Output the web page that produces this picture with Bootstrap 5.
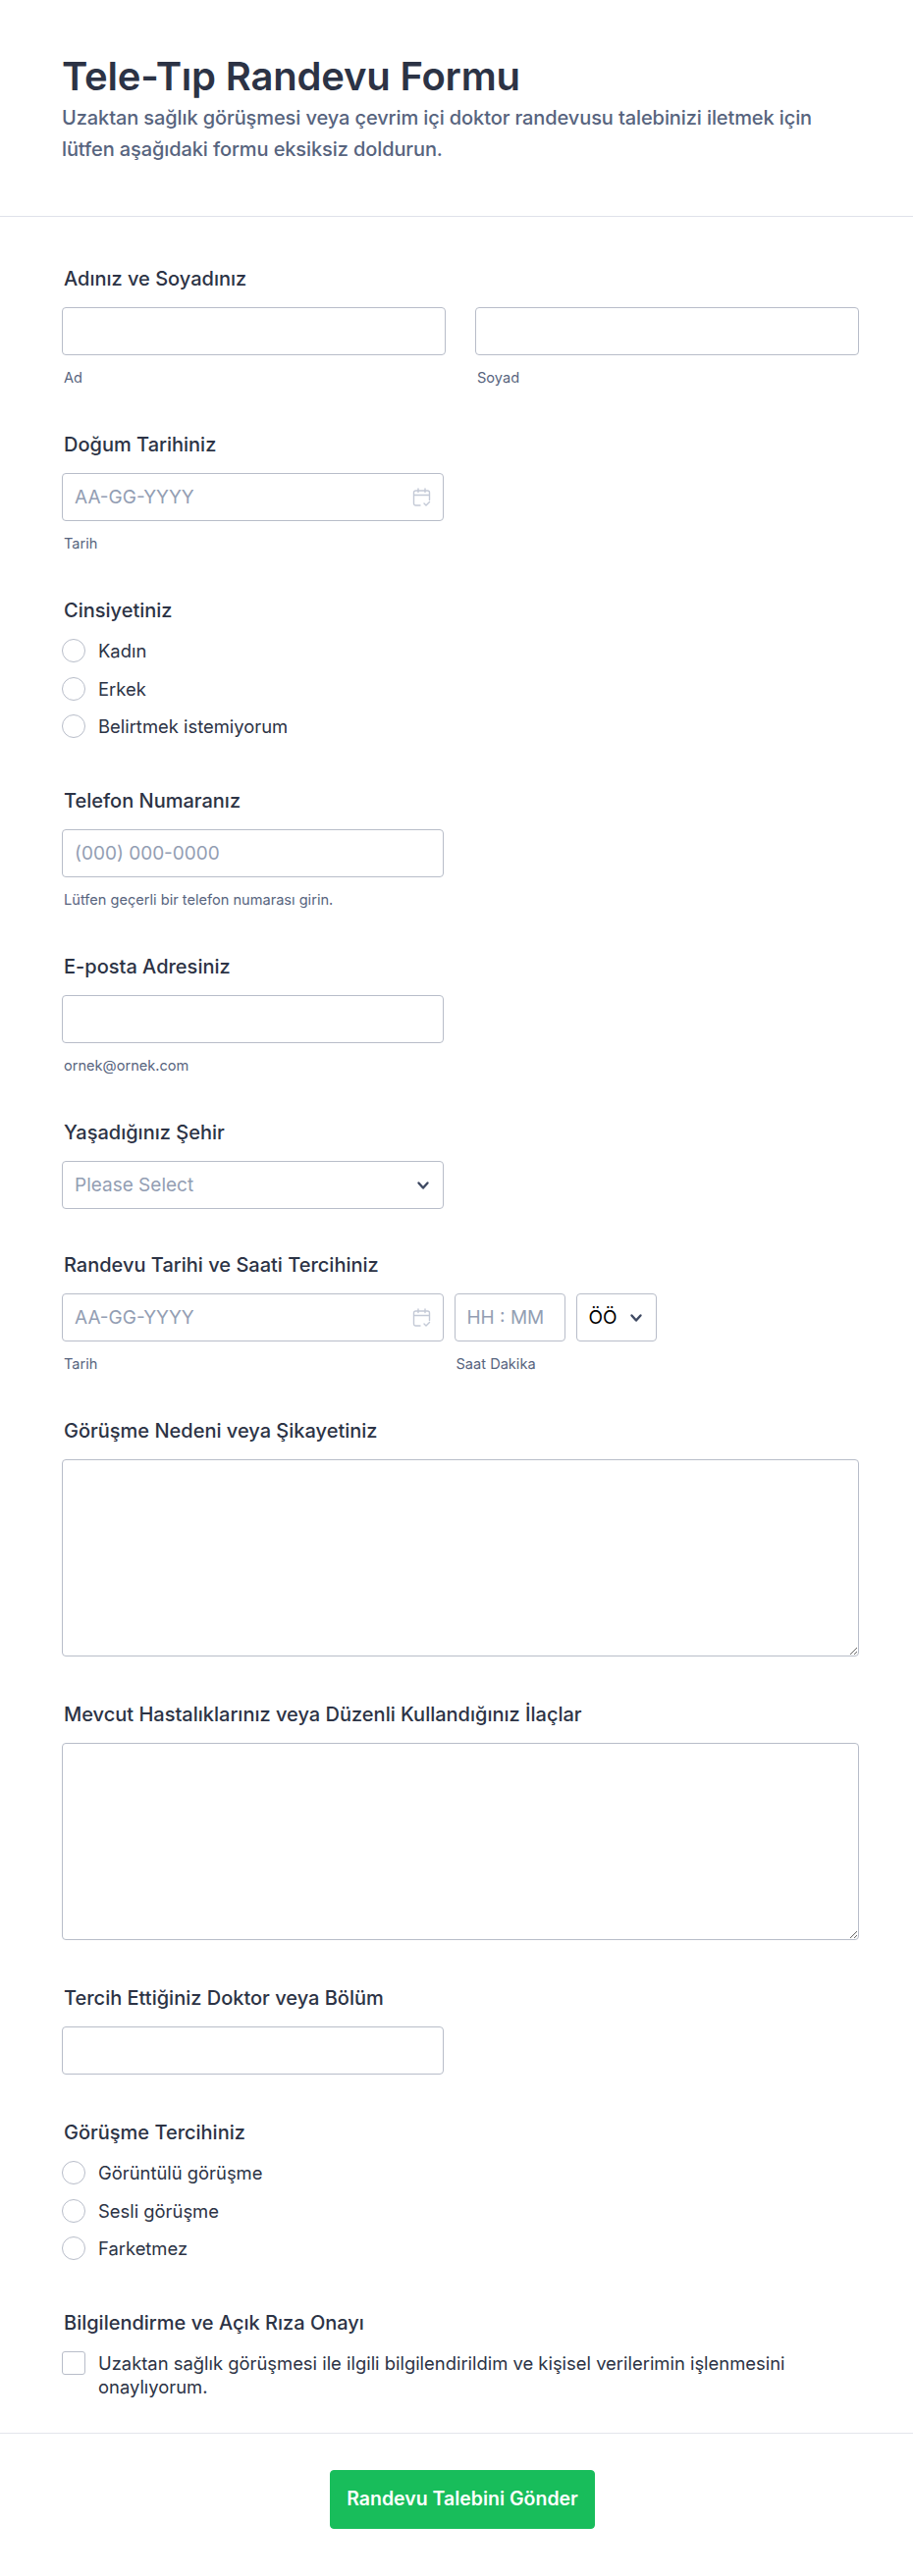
<!doctype html>
<html lang="tr">

<head>
  <meta charset="utf-8">
  <meta name="viewport" content="width=device-width, initial-scale=1">
  <title>Tele-Tıp Randevu Formu</title>
  <link href="https://cdn.jsdelivr.net/npm/bootstrap@5.3.5/dist/css/bootstrap.min.css" rel="stylesheet">
  <style>
    body {
      background-color: #fff;
      color: #2c3345;
      font-family: Inter, "Liberation Sans", sans-serif;
      font-size: 16px;
    }

    .form-head {
      height: 221px;
      padding: 51px 63px 0;
      border-bottom: 1px solid #dfe2ea;
    }

    .form-title {
      font-size: 40px;
      line-height: 53px;
      font-weight: 600;
      letter-spacing: -0.2px;
      margin: 0;
      color: #2c3345;
    }

    .form-sub {
      font-size: 20px;
      line-height: 32px;
      font-weight: 500;
      letter-spacing: -0.1px;
      color: #57647e;
      margin: 0;
    }

    .form-body {
      padding: 51px 55px 0 63px;
    }

    .field {
      margin-bottom: 47px;
    }

    .field-choices {
      margin-bottom: 52px;
    }

    .field-select {
      margin-bottom: 45px;
    }

    .field-last {
      margin-bottom: 35px;
    }

    .field-label {
      display: block;
      font-size: 20px;
      line-height: 24px;
      font-weight: 500;
      margin: 0 0 17px 2px;
      color: #2c3345;
    }

    .form-control,
    .form-select {
      height: 49px;
      border: 1px solid #b8bdc9;
      border-radius: 4px;
      font-size: 19px;
      padding: 0 12px;
      color: #2c3345;
    }

    .form-control::placeholder {
      color: #939eb3;
    }

    textarea.form-control {
      height: 201px;
    }

    .w-half {
      width: 388.5px;
    }

    .name-row {
      gap: 30px;
    }

    .name-row > div {
      flex: 1 1 0;
    }

    .sub-label {
      display: block;
      font-size: 14.6px;
      line-height: 18px;
      color: #57647e;
      margin: 14px 0 0 2px;
    }

    .date-wrap {
      position: relative;
    }

    .cal-icon {
      position: absolute;
      top: 15px;
      right: 13px;
      width: 19px;
      height: 20px;
    }

    .form-select {
      padding-top: 2px;
      background-image: url("data:image/svg+xml,%3csvg xmlns='http://www.w3.org/2000/svg' viewBox='0 0 16 12'%3e%3cpath fill='none' stroke='%233f4a63' stroke-linecap='round' stroke-linejoin='round' stroke-width='2.4' d='M3.500 3.500l4.500 5 4.500-5'/%3e%3c/svg%3e");
      background-position: right 12px center;
      background-size: 16px 12px;
    }

    .select-empty {
      color: #939eb3;
    }

    .date-row {
      gap: 11px;
    }

    .time-input {
      width: 113px;
    }

    .ampm {
      width: 82px;
      color: #000;
      padding-right: 0;
    }

    .choice {
      display: flex;
      align-items: center;
      min-height: 24px;
      padding: 0;
      margin: 0 0 14.5px;
      font-size: 18.4px;
      line-height: 24px;
    }

    .choice:last-child {
      margin-bottom: 0;
    }

    .choice .form-check-input {
      width: 24px;
      height: 24px;
      margin: 0 13px 0 0;
      float: none;
      border: 1px solid #b8bdc9;
      flex-shrink: 0;
    }

    .consent {
      align-items: flex-start;
    }

    .consent .form-check-input {
      border-radius: 3px;
    }

    .form-foot {
      border-top: 1px solid #e3e5ec;
      padding: 37px 0 0 12px;
      height: 147px;
    }

    .send-btn {
      width: 270px;
      height: 60px;
      background-color: #18bd5b;
      border-color: #18bd5b;
      color: #fff;
      font-size: 19.5px;
      font-weight: 600;
      border-radius: 4px;
      padding: 0;
    }
  </style>
</head>

<body>
  <header class="form-head">
    <h1 class="form-title">Tele-Tıp Randevu Formu</h1>
    <p class="form-sub">Uzaktan sağlık görüşmesi veya çevrim içi doktor randevusu talebinizi iletmek için<br>lütfen aşağıdaki formu eksiksiz doldurun.</p>
  </header>

  <form class="form-body">
    <div class="field">
      <label class="field-label">Adınız ve Soyadınız</label>
      <div class="d-flex name-row">
        <div><input class="form-control" type="text"><span class="sub-label">Ad</span></div>
        <div><input class="form-control" type="text"><span class="sub-label">Soyad</span></div>
      </div>
    </div>

    <div class="field">
      <label class="field-label">Doğum Tarihiniz</label>
      <div class="w-half date-wrap">
        <input class="form-control" type="text" placeholder="AA-GG-YYYY">
        <svg class="cal-icon" viewBox="0 0 19 20" fill="none" stroke="#c3c9d6" stroke-width="1.4" stroke-linecap="round" stroke-linejoin="round"><path d="M8 18H3.500a2 2 0 0 1-2-2V5a2 2 0 0 1 2-2h12a2 2 0 0 1 2 2v7.500M1.500 7.500h16M6 1v3.500M13 1v3.500M12 16l2 2 3.500-3.500"/></svg>
      </div>
      <span class="sub-label">Tarih</span>
    </div>

    <div class="field field-choices">
      <label class="field-label">Cinsiyetiniz</label>
      <div class="form-check choice"><input class="form-check-input" type="radio" name="gender"><span>Kadın</span></div>
      <div class="form-check choice"><input class="form-check-input" type="radio" name="gender"><span>Erkek</span></div>
      <div class="form-check choice"><input class="form-check-input" type="radio" name="gender"><span>Belirtmek istemiyorum</span></div>
    </div>

    <div class="field">
      <label class="field-label">Telefon Numaranız</label>
      <input class="form-control w-half" type="text" placeholder="(000) 000-0000">
      <span class="sub-label">Lütfen geçerli bir telefon numarası girin.</span>
    </div>

    <div class="field">
      <label class="field-label">E-posta Adresiniz</label>
      <input class="form-control w-half" type="text">
      <span class="sub-label">ornek@ornek.com</span>
    </div>

    <div class="field field-select">
      <label class="field-label">Yaşadığınız Şehir</label>
      <select class="form-select w-half select-empty"><option>Please Select</option></select>
    </div>

    <div class="field">
      <label class="field-label">Randevu Tarihi ve Saati Tercihiniz</label>
      <div class="d-flex date-row">
        <div class="w-half">
          <div class="date-wrap">
            <input class="form-control" type="text" placeholder="AA-GG-YYYY">
            <svg class="cal-icon" viewBox="0 0 19 20" fill="none" stroke="#c3c9d6" stroke-width="1.4" stroke-linecap="round" stroke-linejoin="round"><path d="M8 18H3.500a2 2 0 0 1-2-2V5a2 2 0 0 1 2-2h12a2 2 0 0 1 2 2v7.500M1.500 7.500h16M6 1v3.500M13 1v3.500M12 16l2 2 3.500-3.500"/></svg>
          </div>
          <span class="sub-label">Tarih</span>
        </div>
        <div class="time-input">
          <input class="form-control" type="text" placeholder="HH : MM">
          <span class="sub-label">Saat Dakika</span>
        </div>
        <div><select class="form-select ampm"><option>ÖÖ</option></select></div>
      </div>
    </div>

    <div class="field">
      <label class="field-label">Görüşme Nedeni veya Şikayetiniz</label>
      <textarea class="form-control"></textarea>
    </div>

    <div class="field">
      <label class="field-label">Mevcut Hastalıklarınız veya Düzenli Kullandığınız İlaçlar</label>
      <textarea class="form-control"></textarea>
    </div>

    <div class="field">
      <label class="field-label">Tercih Ettiğiniz Doktor veya Bölüm</label>
      <input class="form-control w-half" type="text">
    </div>

    <div class="field field-choices">
      <label class="field-label">Görüşme Tercihiniz</label>
      <div class="form-check choice"><input class="form-check-input" type="radio" name="pref"><span>Görüntülü görüşme</span></div>
      <div class="form-check choice"><input class="form-check-input" type="radio" name="pref"><span>Sesli görüşme</span></div>
      <div class="form-check choice"><input class="form-check-input" type="radio" name="pref"><span>Farketmez</span></div>
    </div>

    <div class="field field-last">
      <label class="field-label">Bilgilendirme ve Açık Rıza Onayı</label>
      <div class="form-check choice consent"><input class="form-check-input" type="checkbox"><span>Uzaktan sağlık görüşmesi ile ilgili bilgilendirildim ve kişisel verilerimin işlenmesini onaylıyorum.</span></div>
    </div>
  </form>

  <footer class="form-foot text-center">
    <button class="btn send-btn" type="button">Randevu Talebini Gönder</button>
  </footer>

  <script src="https://cdn.jsdelivr.net/npm/bootstrap@5.3.5/dist/js/bootstrap.bundle.min.js"></script>
</body>

</html>
